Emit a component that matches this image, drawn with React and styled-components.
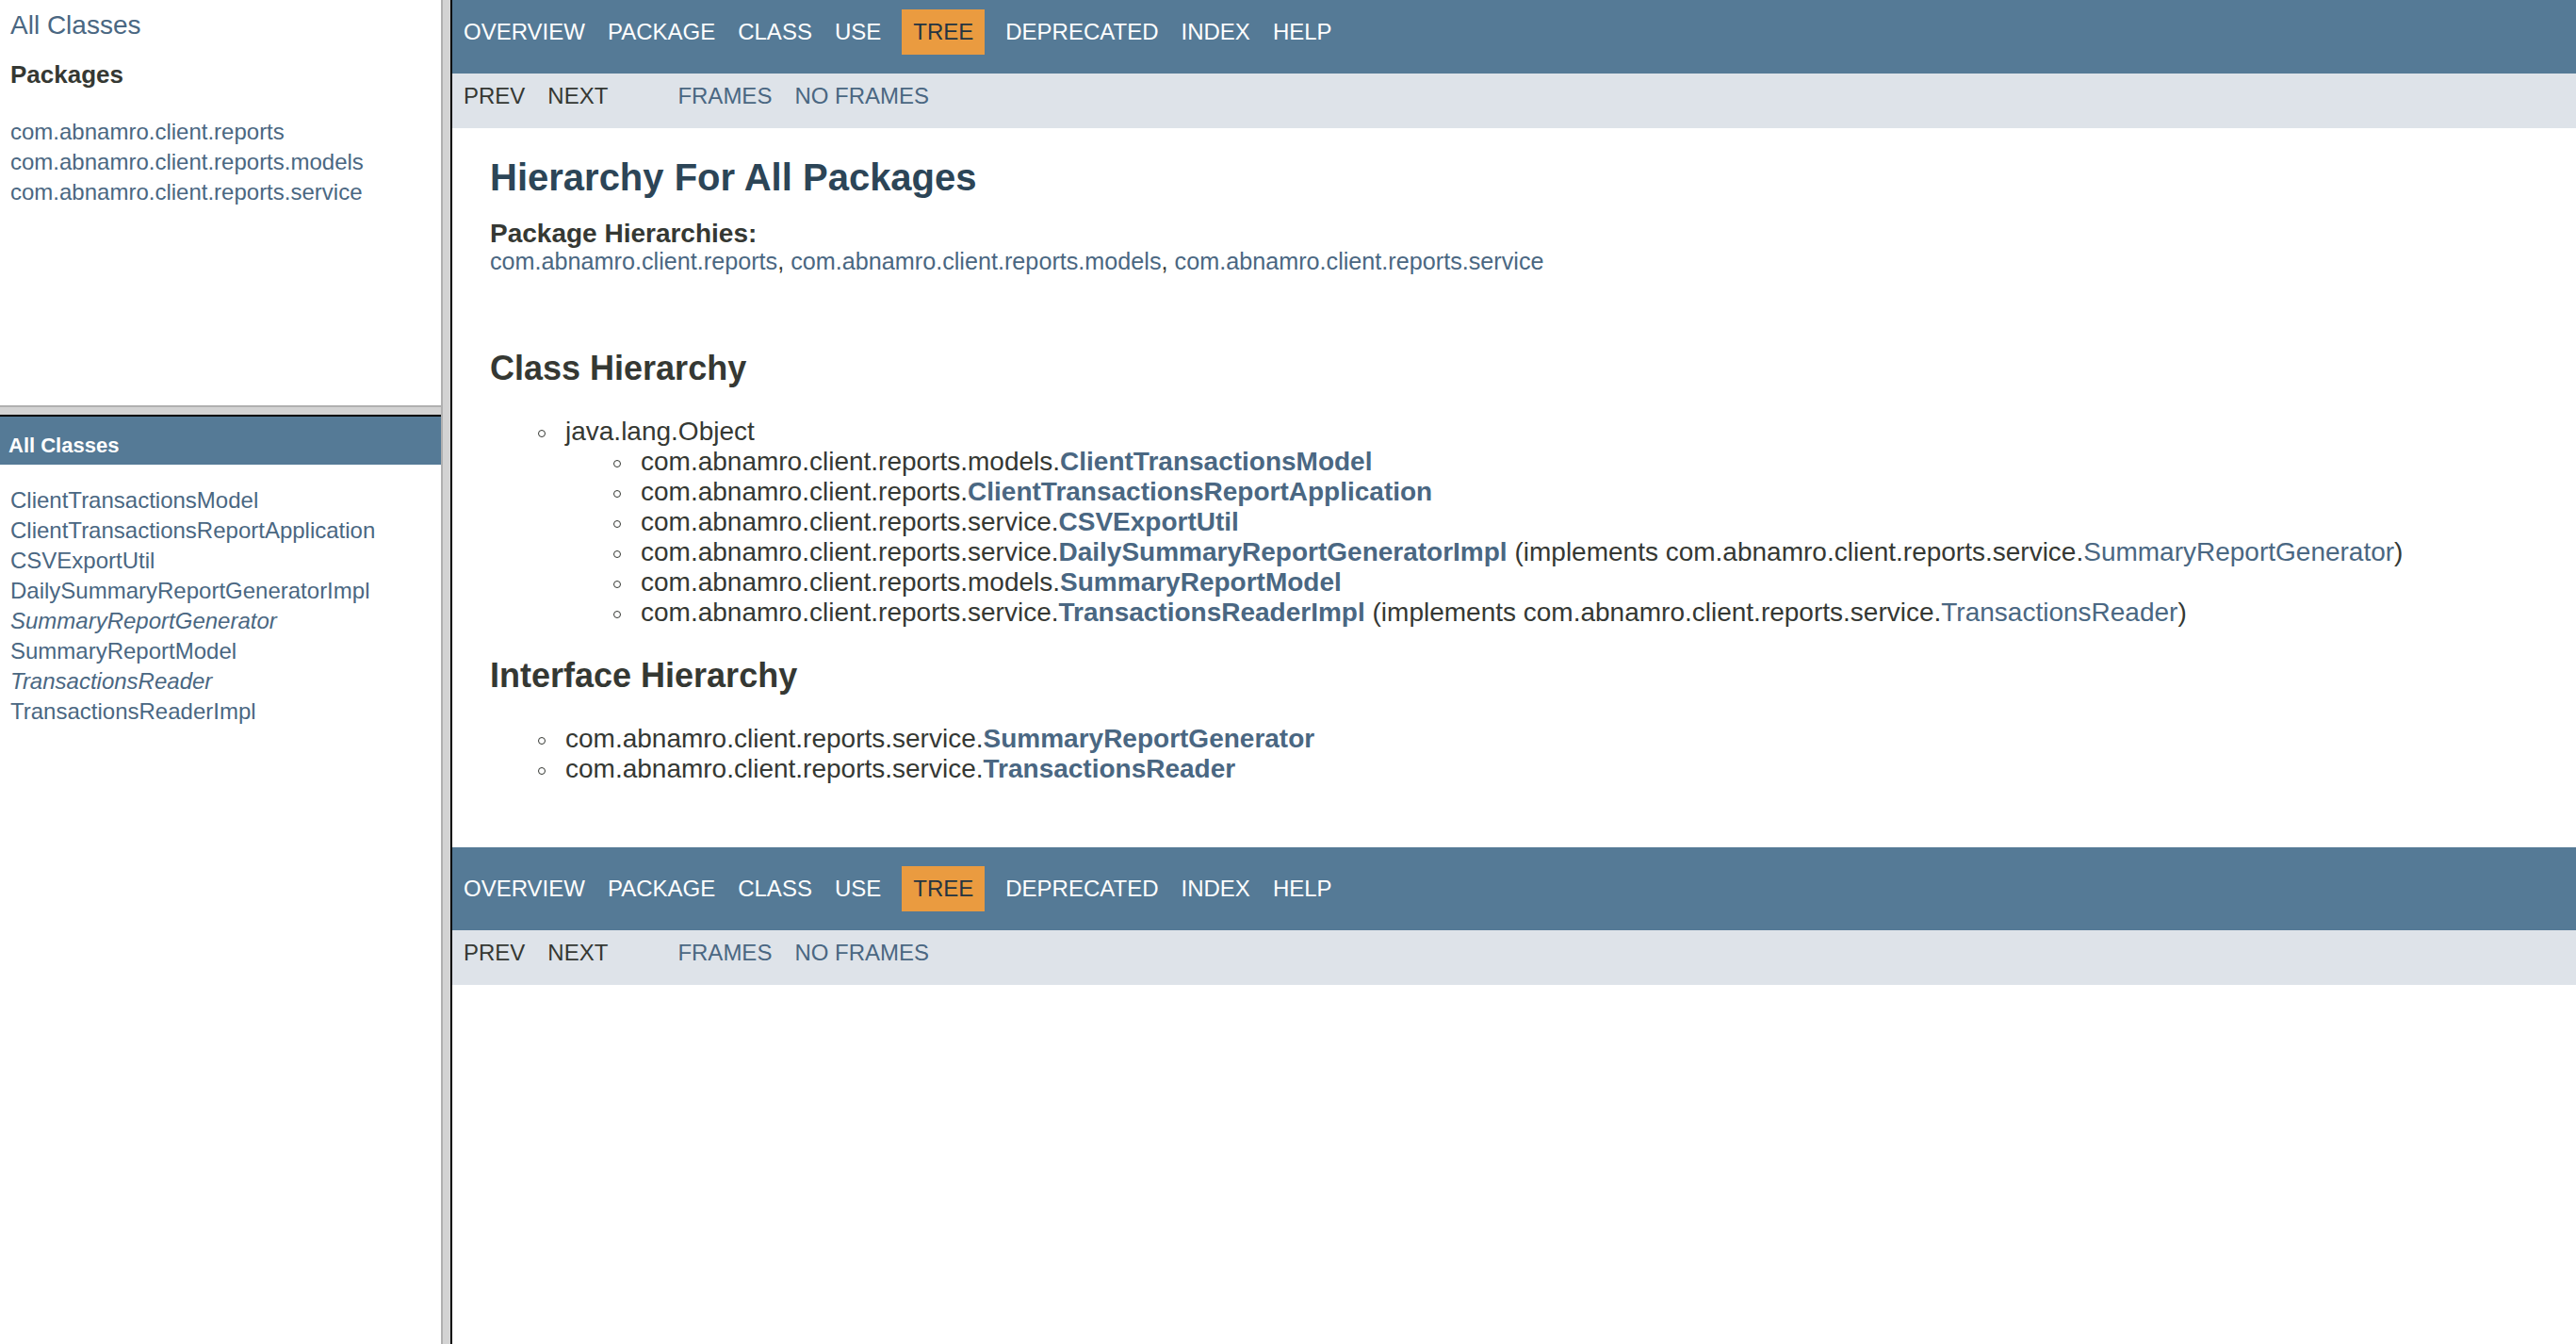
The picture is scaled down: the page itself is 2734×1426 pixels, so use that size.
import React from "react";
import styled, { createGlobalStyle } from "styled-components";

const GlobalStyle = createGlobalStyle`
  *, *::before, *::after { box-sizing: border-box; }
  html, body, #root { height: 100%; margin: 0; padding: 0; }
  body {
    font-family: "Liberation Sans", Arial, Helvetica, sans-serif;
    color: #353833;
    background: #ffffff;
    overflow: hidden;
  }
  a { text-decoration: none; color: #4a6782; }
`;

const Frameset = styled.div`
  display: grid;
  grid-template-columns: 468px 12px 1fr;
  height: 100vh;
  overflow: hidden;
`;

const LeftColumn = styled.div`
  display: grid;
  grid-template-rows: 430px 12px 1fr;
  min-height: 0;
  overflow: hidden;
`;

const VSplitter = styled.div`
  background: #d3d3d3;
  border-left: 2px solid #b0b0b0;
  border-right: 2px solid #000000;
`;

const HSplitter = styled.div`
  background: #d3d3d3;
  border-top: 2px solid #b0b0b0;
  border-bottom: 2px solid #000000;
`;

const Pane = styled.div`
  background: #ffffff;
  overflow: hidden;
  min-height: 0;
`;

const IndexHeader = styled.div`
  padding: 11px 11px 0;
  font-size: 28px;
`;

const IndexContainer = styled.div`
  padding: 0 11px;
`;

const PaneTitle = styled.h2`
  font-size: 26px;
  font-weight: bold;
  margin: 21px 0 27px;
  color: #353833;
`;

const FrameList = styled.ul`
  margin: 0;
  padding: 0;
  list-style: none;
`;

const FrameItem = styled.li`
  font-size: 24px;
  padding-top: 4px;
  font-style: ${(p) => (p.$interface ? "italic" : "normal")};
`;

const Bar = styled.h1`
  margin: 0;
  background: #557a96;
  color: #ffffff;
  font-size: 22px;
  font-weight: bold;
  padding: 18px 9px 7px;
`;

const ClassContainer = styled.div`
  padding: 20px 11px 0;
`;

const ContentFrame = styled.div`
  display: flex;
  flex-direction: column;
  overflow: hidden;
  min-width: 0;
`;

const TopNav = styled.div`
  background: #557a96;
  height: ${(p) => (p.$bottom ? "88px" : "78px")};
  padding-top: ${(p) => (p.$bottom ? "20px" : "10px")};
  margin-top: ${(p) => (p.$bottom ? "20px" : "0")};
  flex-shrink: 0;
`;

const NavList = styled.ul`
  display: flex;
  margin: 0;
  padding: 0;
  list-style: none;
`;

const NavItem = styled.li`
  padding: 10px 12px;
  font-size: 24px;
  line-height: 28px;
  text-transform: uppercase;
  color: ${(p) => (p.$active ? "#253441" : "#ffffff")};
  background: ${(p) => (p.$active ? "#ea9b40" : "transparent")};
  margin: ${(p) => (p.$active ? "0 10px" : "0")};
`;

const SubNav = styled.div`
  background: #dee3e9;
  height: 58px;
  display: flex;
  flex-shrink: 0;
`;

const SubList = styled.ul`
  display: flex;
  margin: 0 50px 0 0;
  padding: 0;
  list-style: none;
`;

const SubItem = styled.li`
  padding: 10px 12px;
  font-size: 24px;
  line-height: 28px;
  text-transform: uppercase;
  color: ${(p) => (p.$link ? "#4a6782" : "#353833")};
`;

const Header = styled.div`
  padding: 10px 40px 0;
`;

const Title = styled.h1`
  font-size: 40px;
  font-weight: bold;
  color: #2c4557;
  margin: 20px 0 22px;
`;

const HierarchyLabel = styled.span`
  display: block;
  font-size: 28px;
  line-height: 30px;
  font-weight: bold;
`;

const HorizontalList = styled.ul`
  margin: 0 0 28px;
  padding: 0;
  list-style: none;
  font-size: 25.2px;
`;

const HorizontalItem = styled.li`
  display: inline;
`;

const Content = styled.div`
  padding: 20px 40px;
`;

const SectionTitle = styled.h2`
  font-size: 36px;
  font-weight: bold;
  margin: 30px 0;
  color: #353833;
`;

const Tree = styled.ul`
  margin: ${(p) => (p.$nested ? "0" : "28px 0 27px")};
  padding-left: 80px;
  list-style: none;
  font-size: 28px;
`;

const TreeItem = styled.li`
  position: relative;

  &::before {
    content: "";
    position: absolute;
    left: -29px;
    top: 14px;
    width: 8px;
    height: 8px;
    border: 1.5px solid #353833;
    border-radius: 50%;
  }
`;

const TypeName = styled.a`
  font-weight: ${(p) => (p.$plain ? "normal" : "bold")};
`;

const navItems = ["Overview", "Package", "Class", "Use", "Tree", "Deprecated", "Index", "Help"];

const packages = [
  "com.abnamro.client.reports",
  "com.abnamro.client.reports.models",
  "com.abnamro.client.reports.service",
];

const classes = [
  { name: "ClientTransactionsModel" },
  { name: "ClientTransactionsReportApplication" },
  { name: "CSVExportUtil" },
  { name: "DailySummaryReportGeneratorImpl" },
  { name: "SummaryReportGenerator", iface: true },
  { name: "SummaryReportModel" },
  { name: "TransactionsReader", iface: true },
  { name: "TransactionsReaderImpl" },
];

const classTree = [
  { pkg: "com.abnamro.client.reports.models.", name: "ClientTransactionsModel" },
  { pkg: "com.abnamro.client.reports.", name: "ClientTransactionsReportApplication" },
  { pkg: "com.abnamro.client.reports.service.", name: "CSVExportUtil" },
  {
    pkg: "com.abnamro.client.reports.service.",
    name: "DailySummaryReportGeneratorImpl",
    impl: "SummaryReportGenerator",
  },
  { pkg: "com.abnamro.client.reports.models.", name: "SummaryReportModel" },
  {
    pkg: "com.abnamro.client.reports.service.",
    name: "TransactionsReaderImpl",
    impl: "TransactionsReader",
  },
];

const interfaces = [
  { pkg: "com.abnamro.client.reports.service.", name: "SummaryReportGenerator" },
  { pkg: "com.abnamro.client.reports.service.", name: "TransactionsReader" },
];

function Navigation({ bottom }) {
  return (
    <>
      <TopNav $bottom={bottom}>
        <NavList>
          {navItems.map((n) => (
            <NavItem key={n} $active={n === "Tree"}>
              {n}
            </NavItem>
          ))}
        </NavList>
      </TopNav>
      <SubNav>
        <SubList>
          <SubItem>Prev</SubItem>
          <SubItem>Next</SubItem>
        </SubList>
        <SubList>
          <SubItem $link>Frames</SubItem>
          <SubItem $link>No&nbsp;Frames</SubItem>
        </SubList>
      </SubNav>
    </>
  );
}

export default function App() {
  return (
    <>
      <GlobalStyle />
      <Frameset>
        <LeftColumn>
          <Pane>
            <IndexHeader>
              <a href="#">All Classes</a>
            </IndexHeader>
            <IndexContainer>
              <PaneTitle>Packages</PaneTitle>
              <FrameList>
                {packages.map((p) => (
                  <FrameItem key={p}>
                    <a href="#">{p}</a>
                  </FrameItem>
                ))}
              </FrameList>
            </IndexContainer>
          </Pane>
          <HSplitter />
          <Pane>
            <Bar>All Classes</Bar>
            <ClassContainer>
              <FrameList>
                {classes.map((c) => (
                  <FrameItem key={c.name} $interface={c.iface}>
                    <a href="#">{c.name}</a>
                  </FrameItem>
                ))}
              </FrameList>
            </ClassContainer>
          </Pane>
        </LeftColumn>
        <VSplitter />
        <ContentFrame>
          <Navigation />
          <Header>
            <Title>Hierarchy For All Packages</Title>
            <HierarchyLabel>Package Hierarchies:</HierarchyLabel>
            <HorizontalList>
              {packages.map((p, i) => (
                <HorizontalItem key={p}>
                  <a href="#">{p}</a>
                  {i < packages.length - 1 ? ", " : ""}
                </HorizontalItem>
              ))}
            </HorizontalList>
          </Header>
          <Content>
            <SectionTitle>Class Hierarchy</SectionTitle>
            <Tree>
              <TreeItem>
                java.lang.Object
                <Tree $nested>
                  {classTree.map((c) => (
                    <TreeItem key={c.name}>
                      {c.pkg}
                      <TypeName href="#">{c.name}</TypeName>
                      {c.impl && (
                        <>
                          {" (implements com.abnamro.client.reports.service."}
                          <TypeName href="#" $plain>
                            {c.impl}
                          </TypeName>
                          {")"}
                        </>
                      )}
                    </TreeItem>
                  ))}
                </Tree>
              </TreeItem>
            </Tree>
            <SectionTitle>Interface Hierarchy</SectionTitle>
            <Tree>
              {interfaces.map((c) => (
                <TreeItem key={c.name}>
                  {c.pkg}
                  <TypeName href="#">{c.name}</TypeName>
                </TreeItem>
              ))}
            </Tree>
          </Content>
          <Navigation bottom />
        </ContentFrame>
      </Frameset>
    </>
  );
}
